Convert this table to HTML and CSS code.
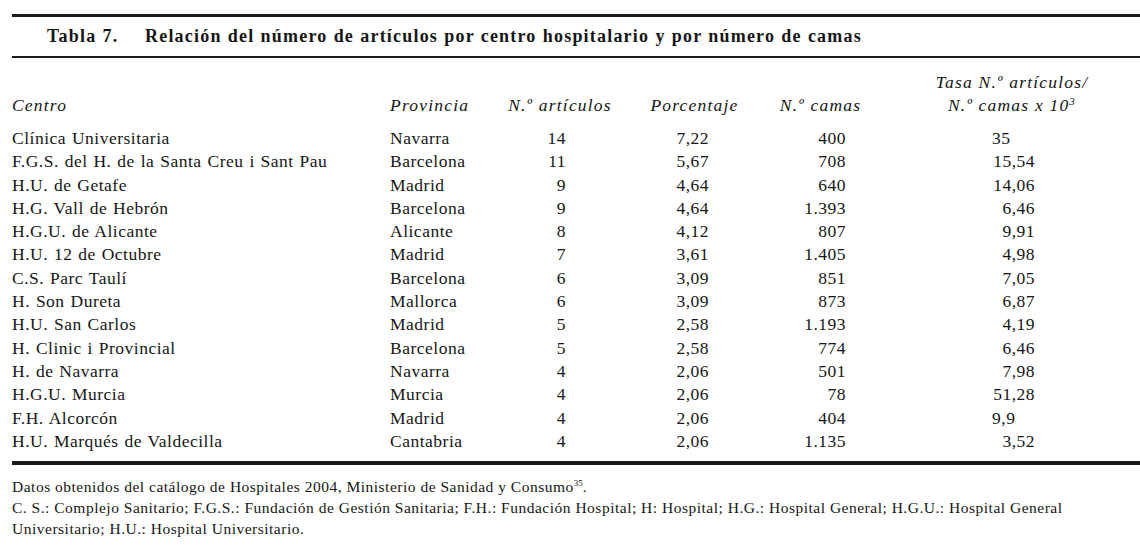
FILE: index.html
```html
<!DOCTYPE html>
<html lang="es">
<head>
<meta charset="utf-8">
<link rel="stylesheet" href="styles.css">
</head>
<body>
<div class="page">
  <div class="rule-thick top"></div>
  <h1 class="title"><span class="label">Tabla 7.</span><span class="caption">Relación del número de artículos por centro hospitalario y por número de camas</span></h1>
  <div class="rule-thin"></div>
  <table class="data">
    <colgroup>
      <col class="c1"><col class="c2"><col class="c3"><col class="c4"><col class="c5"><col class="c6">
    </colgroup>
    <thead>
      <tr>
        <th class="left">Centro</th>
        <th class="left">Provincia</th>
        <th class="center">N.º artículos</th>
        <th class="center h4">Porcentaje</th>
        <th class="center h5">N.º camas</th>
        <th class="center h6">Tasa N.º artículos/<br>N.º camas x 10<sup>3</sup></th>
      </tr>
    </thead>
    <tbody>
      <tr><td>Clínica Universitaria</td><td>Navarra</td><td class="n3">14</td><td class="n4">7,22</td><td class="n5">400</td><td class="n6l">35</td></tr>
      <tr><td>F.G.S. del H. de la Santa Creu i Sant Pau</td><td>Barcelona</td><td class="n3">11</td><td class="n4">5,67</td><td class="n5">708</td><td class="n6">15,54</td></tr>
      <tr><td>H.U. de Getafe</td><td>Madrid</td><td class="n3">9</td><td class="n4">4,64</td><td class="n5">640</td><td class="n6">14,06</td></tr>
      <tr><td>H.G. Vall de Hebrón</td><td>Barcelona</td><td class="n3">9</td><td class="n4">4,64</td><td class="n5">1.393</td><td class="n6">6,46</td></tr>
      <tr><td>H.G.U. de Alicante</td><td>Alicante</td><td class="n3">8</td><td class="n4">4,12</td><td class="n5">807</td><td class="n6">9,91</td></tr>
      <tr><td>H.U. 12 de Octubre</td><td>Madrid</td><td class="n3">7</td><td class="n4">3,61</td><td class="n5">1.405</td><td class="n6">4,98</td></tr>
      <tr><td>C.S. Parc Taulí</td><td>Barcelona</td><td class="n3">6</td><td class="n4">3,09</td><td class="n5">851</td><td class="n6">7,05</td></tr>
      <tr><td>H. Son Dureta</td><td>Mallorca</td><td class="n3">6</td><td class="n4">3,09</td><td class="n5">873</td><td class="n6">6,87</td></tr>
      <tr><td>H.U. San Carlos</td><td>Madrid</td><td class="n3">5</td><td class="n4">2,58</td><td class="n5">1.193</td><td class="n6">4,19</td></tr>
      <tr><td>H. Clinic i Provincial</td><td>Barcelona</td><td class="n3">5</td><td class="n4">2,58</td><td class="n5">774</td><td class="n6">6,46</td></tr>
      <tr><td>H. de Navarra</td><td>Navarra</td><td class="n3">4</td><td class="n4">2,06</td><td class="n5">501</td><td class="n6">7,98</td></tr>
      <tr><td>H.G.U. Murcia</td><td>Murcia</td><td class="n3">4</td><td class="n4">2,06</td><td class="n5">78</td><td class="n6">51,28</td></tr>
      <tr><td>F.H. Alcorcón</td><td>Madrid</td><td class="n3">4</td><td class="n4">2,06</td><td class="n5">404</td><td class="n6l">9,9</td></tr>
      <tr><td>H.U. Marqués de Valdecilla</td><td>Cantabria</td><td class="n3">4</td><td class="n4">2,06</td><td class="n5">1.135</td><td class="n6">3,52</td></tr>
    </tbody>
  </table>
  <div class="rule-thick bottom"></div>
  <div class="notes">
    <p>Datos obtenidos del catálogo de Hospitales 2004, Ministerio de Sanidad y Consumo<sup>35</sup>.</p>
    <p>C. S.: Complejo Sanitario; F.G.S.: Fundación de Gestión Sanitaria; F.H.: Fundación Hospital; H: Hospital; H.G.: Hospital General; H.G.U.: Hospital General Universitario; H.U.: Hospital Universitario.</p>
  </div>
</div>
</body>
</html>
```

FILE: styles.css
```css
html, body {
  margin: 0;
  padding: 0;
  background: #fff;
}

body {
  font-family: "Liberation Serif", "Times New Roman", serif;
  color: #161616;
}

.page {
  margin-left: 12px;
  padding-top: 14px;
}

.rule-thick {
  height: 3px;
  background: #1a1a1a;
}

.rule-thick.bottom {
  height: 4px;
}

.rule-thin {
  height: 2px;
  background: #1a1a1a;
}

.title {
  margin: 0;
  padding: 10px 0 10px 35px;
  font-size: 18px;
  line-height: 19px;
  font-weight: bold;
  letter-spacing: 1.2px;
  word-spacing: 0.5px;
  display: flex;
}

.title .label {
  width: 98px;
  flex: none;
}

.data {
  border-collapse: collapse;
  table-layout: fixed;
  width: 1128px;
  font-size: 17.5px;
  margin-top: 13px;
  margin-bottom: 8px;
}

.c1 { width: 378px; }
.c2 { width: 110px; }
.c3 { width: 120px; }
.c4 { width: 145px; }
.c5 { width: 115px; }
.c6 { width: 260px; }

.data th {
  font-weight: normal;
  font-style: italic;
  vertical-align: bottom;
  line-height: 23px;
  letter-spacing: 1.2px;
  padding: 0 0 10px 0;
  white-space: nowrap;
}

.data th sup {
  font-size: 11px;
  line-height: 0;
  vertical-align: 6px;
}

.data td {
  padding: 0;
  line-height: 23.3px;
  letter-spacing: 0.5px;
  word-spacing: 1px;
  white-space: nowrap;
}

.left { text-align: left; }
.center { text-align: center; }
.h4 { padding-left: 4px !important; }
.h5 { padding-right: 4px !important; }
.h6 { padding-left: 4px !important; }

.n3 { text-align: right; padding-right: 54px !important; }
.n4 { text-align: right; padding-right: 56px !important; }
.n5 { text-align: right; padding-right: 34px !important; }
.n6 { text-align: right; padding-right: 105px !important; }
.n6l { text-align: left; padding-left: 112px !important; }

.notes {
  padding-top: 11px;
  font-size: 15.5px;
  line-height: 21px;
  letter-spacing: 0.5px;
  width: 1100px;
}

.notes p {
  margin: 0;
}

.notes sup {
  font-size: 9px;
  line-height: 0;
  vertical-align: 6px;
  letter-spacing: 0;
}
```
